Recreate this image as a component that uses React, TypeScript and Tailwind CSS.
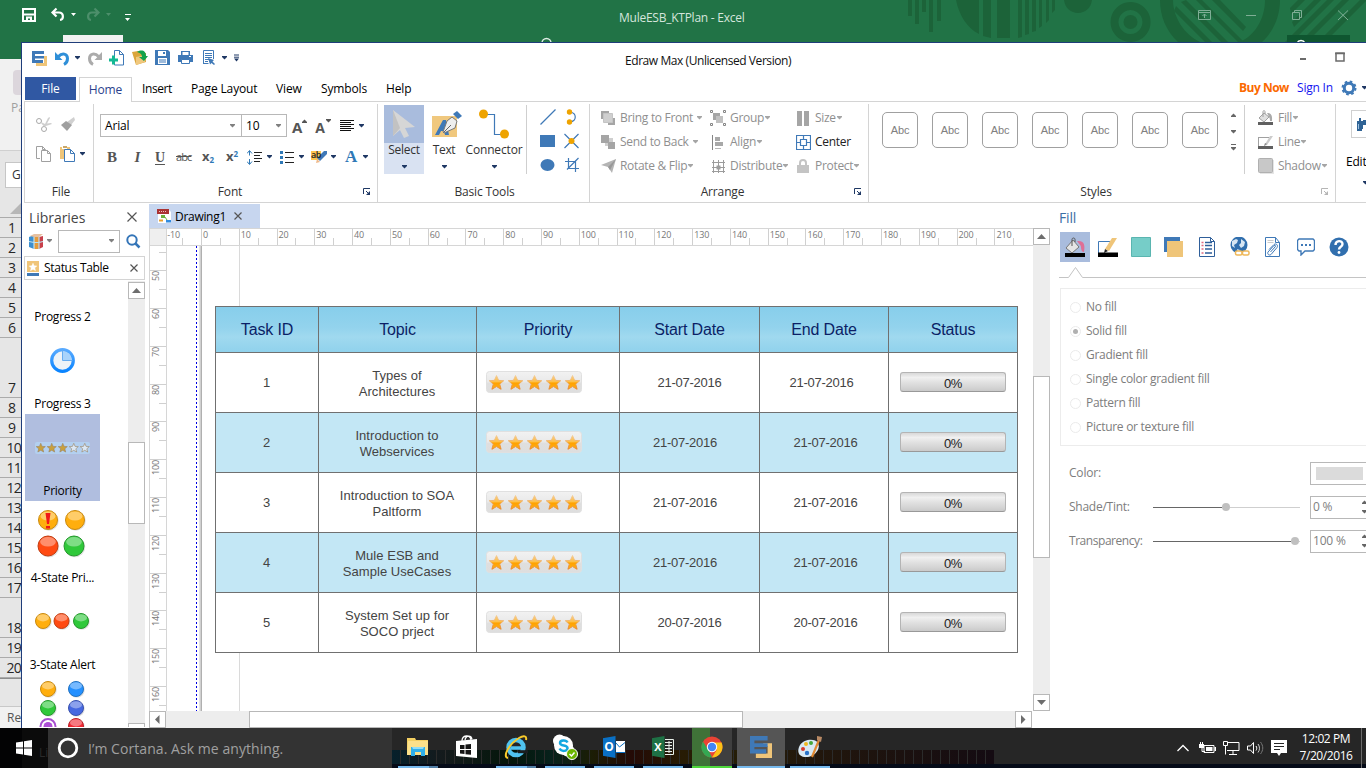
import React from "react";

type IconProps = { w: number; h: number; c?: string; children: React.ReactNode };

function Svg({ w, h, c = "", children }: IconProps) {
  return (
    <svg width={w} height={h} viewBox={`0 0 ${w} ${h}`} fill="none" className={`block shrink-0 ${c}`}>
      {children}
    </svg>
  );
}

function Caret({ color = "#1f3864", c = "" }: { color?: string; c?: string }) {
  return (
    <Svg w={7} h={4} c={c}>
      <path d="M1 0h5v1L3.500 3.500 1 1z" fill={color} />
    </Svg>
  );
}

/* ---------- Spreadsheet window behind ---------- */

function ExcelTitle() {
  return (
    <div className="relative h-[59px] bg-[#217346] overflow-hidden">
      <div className="absolute left-0 top-0">
        <Svg w={1366} h={59}>
          <g fill="#1c6339">
            <path d="M908 0h4v16h-4zM915 0h4v24h-4zM922 0h4v12h-4zM929 0h4v32h-4zM937 0h4v21h-4z" />
            <path d="M956 0h23v34c-12-6-20-19-23-34zM983 0h8v38l-8-2zM997 0h13v38h-13zM1018 0h4v37l-4 1zM1025 0h4v34l-4 1zM1032 0h4v31l-4 1zM1039 0h3v26l-3 2zM1046 0h3v20l-3 3zM1052 0h3v10l-3 3z" />
            <path d="M1064 0h28c-1 8-7 13-14 13s-13-5-14-13z" />
            <path d="M1130.500 2a20 20 0 1 0 .1 0zm0 8a12 12 0 1 1-.1 0z" fillRule="evenodd" />
            <circle cx="1130.500" cy="22" r="7" />
            <path d="M1160 0h13c0 18 12 35 27 42h-22c-12-11-18-26-18-42zM1265 0h15c0 16-6 31-18 42h-22c15-7 25-23 25-42z" />
            <path d="M1174 11l31 31h7l-36-36zM1181 2l40 40h7l-42-42zM1196 0l42 42h6l-42-42zM1212 0l31 31 3-4-26-27z" />
            <path d="M1290 8l8-8h7l-14 14zM1292 22l22-22h7l-27 27zM1303 24l24-24h7l-28 28zM1285 42l42-42h7l-42 42zM1300 42l42-42h7l-42 42zM1318 42l42-42h6v1l-41 41z" />
          </g>
          <path d="M23 9h12v12H23zM23 14.500h12M27 21v-3.500h4V21" stroke="#fff" strokeWidth="2" />
          <path d="M56.500 8.500L52.500 12.500l4 4M53 12.500h6c5 0 5 7 1 7.500" stroke="#fff" strokeWidth="2.200" />
          <path d="M71 13h5l-2.500 3zM125 18h5l-2.500 3z" fill="#fff" />
          <path d="M125 14.500h6" stroke="#fff" />
          <path d="M94.500 8.500l4 4-4 4M98 12.500h-6c-5 0-5 7-1 7.500" stroke="#4d8f6b" strokeWidth="2.200" />
          <path d="M106 13h5l-2.500 3z" fill="#4d8f6b" />
          <path d="M542 43a4.500 4.500 0 0 1 9 0" stroke="#dfece5" strokeWidth="1.500" />
          <path d="M1198.500 10.500h12v9h-12zM1198.500 12.500h12M1204.500 18v-4M1202.500 16l2-2 2 2M1246 15.500h10M1292.500 12.500h7v7h-7zM1294.500 12.500v-2h7v7h-2M1338 10.500l10 9.500M1348 10.500l-10 9.500" stroke="#7fae95" />
          <path d="M1287 35h63v7h-63z" fill="#0f5630" />
          <path d="M1297 43a4.500 4.500 0 0 1 8 0" stroke="#fff" strokeWidth="1.500" />
          <path d="M63 35h60v7H63z" fill="#f1f1f1" />
        </Svg>
      </div>
      <div className="relative pt-[8px] pl-[619px] text-[12px] leading-[20px] tracking-[-0.25px] text-[#d5e5dc] whitespace-nowrap">MuleESB_KTPlan - Excel</div>
    </div>
  );
}

function RowHead({ n, h = "h-[20px]" }: { n: string; h?: string }) {
  return (
    <div className={`${h} flex items-end justify-end border-b border-[#ababab] pr-[1px] pb-[1px] text-[14px] leading-[17px] text-[#262626]`}>
      <span className={n.length === 1 ? "pr-[5px]" : "tracking-[-0.7px]"}>{n}</span>
    </div>
  );
}

function ExcelWindow() {
  return (
    <div className="absolute inset-0 bg-[#e6e6e6]">
      <ExcelTitle />
      <div className="w-[22px] overflow-hidden">
        <div className="h-[92px] bg-[#f1f1f1] border-b border-[#d0d0d0] pt-[11px]">
          <div className="ml-[13px] h-[25px] w-[9px] rounded-l-sm bg-[#dcd6dc]" />
          <div className="ml-[11px] mt-[4px] text-[12px] text-[#a0a0a0]">Paste</div>
        </div>
        <div className="mt-[11px] ml-[5px] h-[26px] w-[30px] border border-[#c6c6c6] bg-white pl-[6px] text-[12px] leading-[24px] text-[#333]">G</div>
        <div className="flex h-[30px] items-end justify-end border-b border-[#ababab] pb-[3px]">
          <Svg w={12} h={12}><path d="M12 0v12H0z" fill="#b7b7b7" /></Svg>
        </div>
        {["1", "2", "3", "4", "5", "6"].map((n) => <RowHead key={n} n={n} />)}
        <RowHead n="7" h="h-[60px]" />
        {["8", "9", "10", "11", "12", "13", "14", "15", "16", "17"].map((n) => <RowHead key={n} n={n} />)}
        <RowHead n="18" h="h-[40px]" />
        <RowHead n="19" />
        <RowHead n="20" />
        <div className="h-[28px] border-t border-[#8d8d8d]" />
        <div className="h-[22px] border-t border-[#c8c8c8] bg-[#f1f1f1] pl-[7px] text-[12px] leading-[21px] text-[#555]">Ready</div>
      </div>
    </div>
  );
}

/* ---------- Title bar and tabs ---------- */

const BLUE = "#3f79b7";

function EdrawLogo({ s = 15 }: { s?: number }) {
  return (
    <svg width={s} height={s} viewBox="0 0 15 15" className="block shrink-0">
      <path d="M9 5h6v10H4v-3h8V7H9z" fill="#efc579" />
      <path d="M0 0h12v3H3v2h9v2.500H3V9h8v3H0z" fill={BLUE} />
    </svg>
  );
}

function QuickAccess() {
  return (
    <div className="flex h-[30px] items-center">
      <div className="ml-[10px]"><EdrawLogo /></div>
      <Svg w={15} h={15} c="ml-[8px]">
        <path d="M0 1v8h7.500L5 6.500 3 4z" fill="#2f8fd8" />
        <path d="M3.500 5.500C7 1.500 12.500 2.500 12.500 7.500c0 3-1.500 5-3.500 6" stroke="#2f8fd8" strokeWidth="3" />
      </Svg>
      <Caret c="ml-[4px]" />
      <Svg w={15} h={15} c="ml-[6px]">
        <path d="M15 1v8H7.500L10 6.500 12 4z" fill="#ababab" />
        <path d="M11.500 5.500C8 1.500 2.500 2.500 2.500 7.500c0 3 1.500 5 3.500 6" stroke="#ababab" strokeWidth="3" />
      </Svg>
      <Svg w={16} h={16} c="ml-[7px]">
        <path d="M5.500 6V.5h5l4 4v10.500h-9V14M10.500.5v4h4" stroke={BLUE} />
        <path d="M0 8.500h3V5.500h3v3h3v3H6v3H3v-3H0z" fill="#13b894" />
      </Svg>
      <Svg w={16} h={16} c="ml-[7px]">
        <path d="M0 2l6-1 2 2h6v9L4 15z" fill="#dba63c" />
        <path d="M4 7l10-2-1 7-9 3z" fill="#f0c87e" />
        <path d="M5 2c5-3 9-1 9 4h2l-4 5-5-4h3c0-3-2-4-5-5z" fill="#12a24c" />
      </Svg>
      <Svg w={16} h={16} c="ml-[7px]">
        <path d="M0 0h13l2 2v13H0z" fill={BLUE} />
        <path d="M3 1h8v5H3zM3 8h9v6H3z" fill="#fff" />
        <path d="M8 2h2v2H8zM4 9.500h7v1H4zM4 11.500h7v1H4z" fill={BLUE} />
      </Svg>
      <Svg w={16} h={16} c="ml-[7px]">
        <path d="M0 5h15v7H0zM3 1h9v4H3z" fill={BLUE} />
        <path d="M4.500 2h6v3h-6z" fill="#fff" />
        <path d="M3.500 9.500h8v4h-8z" fill="#fff" stroke={BLUE} />
        <path d="M11 6h2v1h-2z" fill="#fff" />
      </Svg>
      <Svg w={13} h={16} c="ml-[9px]">
        <path d="M.5 14V.5h10V9M.5 13.500h5M2 3.500h7M2 5.500h7M2 7.500h7M2 9.500h4M2 11.500h3" stroke={BLUE} />
        <path d="M5 8l6 2-1.500 1.500L12 14l-1 1-2.500-2L7 14.500z" fill={BLUE} />
      </Svg>
      <Caret c="ml-[5px]" />
      <Svg w={7} h={8} c="ml-[5px]">
        <path d="M1 1h5M1 3.200h5" stroke="#1f3864" />
        <path d="M1 4.500h5L3.500 7.500z" fill="#1f3864" />
      </Svg>
      <div className="ml-[385px] pt-[5px] text-[12px] tracking-[-0.43px] whitespace-nowrap text-[#111]">Edraw Max (Unlicensed Version)</div>
      <Svg w={46} h={10} c="ml-auto mr-[20px] mb-[3px]">
        <path d="M0 6h6v2H0z" fill="#6b6b6b" />
        <path d="M36 1h8v8h-8zM35 1.500h10" stroke="#6b6b6b" strokeWidth="1.500" />
      </Svg>
    </div>
  );
}

function MenuTabs() {
  return (
    <div className="flex h-[28px] items-end">
      <div className="ml-[3px] mb-[1px] h-[23px] w-[51px] bg-[#3058a3] text-center text-[12px] leading-[23px] text-white">File</div>
      <div className="ml-[3px] -mb-px h-[25px] w-[53px] border border-b-0 border-[#d4d4d4] bg-white text-center text-[12px] leading-[24px] text-[#2b3f8c]">Home</div>
      <div className="flex h-[25px] items-center text-[12px] text-black whitespace-nowrap">
        <span className="ml-[10px] w-[49px] tracking-[-0.4px]">Insert</span>
        <span className="w-[85px]">Page Layout</span>
        <span className="w-[45px]">View</span>
        <span className="w-[65px]">Symbols</span>
        <span>Help</span>
      </div>
      <div className="ml-auto flex h-[25px] items-center pb-[1px] text-[12px] whitespace-nowrap">
        <span className="w-[58px] font-bold tracking-[-0.5px] text-[#fb6a00]">Buy Now</span>
        <span className="w-[44px] tracking-[-0.2px] text-[#1414f0]">Sign In</span>
        <Svg w={16} h={16}>
          <circle cx="8" cy="8" r="4.700" stroke={BLUE} strokeWidth="3" />
          <circle cx="8" cy="8" r="6.500" stroke={BLUE} strokeWidth="2" strokeDasharray="2.600 2.500" />
        </Svg>
        <Caret c="ml-[4px] -mr-[2px]" />
      </div>
    </div>
  );
}

/* ---------- Ribbon ---------- */

function Launcher({ c = "", color = "#1f3864" }: { c?: string; color?: string }) {
  return (
    <Svg w={8} h={8} c={c}>
      <path d="M.5 6V.5H7M3 3l3 3" stroke={color} />
      <path d="M7 3v4H3z" fill={color} />
    </Svg>
  );
}

function Group({ w, label, labelPad, launcher, children }: { w: string; label: string; labelPad: string; launcher?: React.ReactNode; children: React.ReactNode }) {
  return (
    <div className={`${w} flex h-[99px] shrink-0 flex-col border-r border-[#d4d4d4]`}>
      <div className="h-[79px]">{children}</div>
      <div className="flex h-[17px] items-center">
        <span className={`${labelPad} flex-1 text-center text-[12px] text-[#333] whitespace-nowrap`}>{label}</span>
        {launcher}
      </div>
    </div>
  );
}

function FileGroup() {
  return (
    <Group w="w-[69px]" label="File" labelPad="pl-[4px]">
      <div className="flex h-[31px] items-center pl-[11px] pt-[5px] mt-[2px]">
        <Svg w={16} h={15}>
          <circle cx="3" cy="4" r="2.500" stroke="#a8a8a8" /><circle cx="8" cy="12" r="2.500" stroke="#a8a8a8" />
          <path d="M5 5l4 2 3-6 1.500-1 .5 1-3 5.500 4-.500 1 1-4.500 1.500L8 9.500 5 6z" fill="#cfcfcf" />
        </Svg>
        <Svg w={14} h={14} c="ml-[9px]">
          <path d="M13 0l1 3-4 5-4-3z" fill="#d0d0d0" /><path d="M5 4l6 4-5 6-6-6z" fill="#9f9f9f" />
        </Svg>
      </div>
      <div className="flex h-[31px] items-center pl-[11px] pt-[2px]">
        <Svg w={16} h={16}>
          <path d="M4 12.500H.5V.5h6l3 3M6.500.5v3h3M5.500 4.500h6l3 3v8h-9zM11.500 4.500v3h3" stroke="#a0a0a0" />
        </Svg>
        <Svg w={15} h={16} c="ml-[8px]">
          <path d="M0 1h10v12H0z" fill="#efc579" /><path d="M2 0h5v3H2z" fill="#fff" /><path d="M3 0h4v2H3z" fill="#c9a769" />
          <path d="M4.500 3.500h6l4 4v8h-10z" fill="#fff" stroke={BLUE} /><path d="M10.500 3.500v4h4" stroke={BLUE} />
        </Svg>
        <Caret c="ml-[4px]" />
      </div>
    </Group>
  );
}

function FontGroup() {
  return (
    <Group w="w-[284px]" label="Font" labelPad="pl-[3px]" launcher={<Launcher c="mr-[6px]" />}>
      <div className="flex h-[23px] items-center pl-[6px] mt-[10px] text-[12px] text-black">
        <div className="flex h-[23px] w-[142px] items-center justify-between border border-[#b8b8b8] pl-[4px] pr-[5px]">Arial<Caret color="#808080" /></div>
        <div className="-ml-px flex h-[23px] w-[46px] items-center justify-between border border-[#b8b8b8] pl-[4px] pr-[4px]">10<Caret color="#808080" /></div>
        <div className="ml-[5px] flex h-[20px] items-end text-[15px] font-bold leading-[17px] text-[#555]">A<Caret color="#555" c="rotate-180 mb-[13px] -ml-px" /></div>
        <div className="ml-[7px] flex h-[20px] items-end text-[14px] font-bold leading-[17px] text-[#555]">A<Caret color="#555" c="mb-[13px]" /></div>
        <Svg w={14} h={12} c="ml-[8px]"><path d="M0 .5h14M0 2.500h11M0 4.500h14M0 6.500h11M0 8.500h14M0 10.500h11" stroke="#111" /></Svg>
        <Caret c="ml-[4px]" />
      </div>
      <div className="mt-[5px] flex h-[30px] items-center pl-[13px] text-[#555]">
        <span className="w-[24px] font-['Liberation_Serif'] text-[15px] font-bold">B</span>
        <span className="w-[24px] font-['Liberation_Serif'] text-[15px] font-bold italic">&nbsp;I</span>
        <span className="w-[21px] font-['Liberation_Serif'] text-[14px] font-bold underline underline-offset-2">U</span>
        <span className="w-[26px] text-[11px] tracking-[-0.9px] line-through">abc</span>
        <span className="w-[24px] text-[13px] font-bold">x<sub className="text-[8px] text-[#2f79b7]">2</sub></span>
        <span className="w-[21px] text-[13px] font-bold">x<sup className="text-[8px] text-[#2f79b7]">2</sup></span>
        <Svg w={15} h={15}>
          <path d="M2.500 1v4.500M2.500 9v5M0 3.500l2.500-3 2.500 3M0 11.500l2.500 3 2.500-3" stroke="#2f79b7" /><path d="M7 2.500h8M7 5.500h6M7 8.500h8M7 11.500h6" stroke="#222" />
        </Svg>
        <Caret c="ml-[4px]" />
        <Svg w={14} h={13} c="ml-[7px]">
          <path d="M0 0h3v3H0zM0 5h3v3H0zM0 10h3v3H0z" fill="#2f79b7" /><path d="M5 1.500h9M5 6.500h9M5 11.500h9" stroke="#222" />
        </Svg>
        <Caret c="ml-[4px]" />
        <div className="relative ml-[6px] h-[14px] w-[17px]">
          <div className="h-[9px] w-[10px] bg-[#ffc64f] mt-[1px]" />
          <div className="absolute left-0 top-0"><Svg w={17} h={14}><path d="M13 1h3v3l-7 7-3-3z" fill={BLUE} /><path d="M6 9l3 3-4 1z" fill="#efb98a" /></Svg></div>
          <div className="absolute left-0 top-0 text-[9px] leading-[9px] font-semibold tracking-[-0.5px] text-[#222]">ab</div>
        </div>
        <Caret c="ml-[2px]" />
        <span className="ml-[8px] w-[13px] font-['Liberation_Serif'] text-[17px] font-bold text-[#2f79b7]">A</span>
        <Caret c="ml-[4px]" />
      </div>
    </Group>
  );
}

function BasicTools() {
  return (
    <Group w="w-[212px]" label="Basic Tools" labelPad="pl-[2px]">
      <div className="flex pl-[6px] pt-[1px] text-[12px] text-[#333]">
        <div className="flex h-[69px] w-[40px] flex-col items-center bg-[#d9e2f2]">
          <div className="flex h-[38px] w-[40px] items-center justify-center bg-[#a9bcdd]">
            <Svg w={24} h={30}><path d="M1 1v26l7-6 4 8 5-2-4-8 10-1z" fill="#d6d6d6" /><path d="M1 1v26l7-8z" fill="#c2c2c2" /></Svg>
          </div>
          <span className="leading-[14px] -tracking-[0.3px]">Select</span>
          <Caret c="mt-[8px]" />
        </div>
        <div className="flex h-[69px] w-[40px] flex-col items-center">
          <div className="flex h-[38px] items-center pl-[5px]">
            <Svg w={30} h={28}>
              <path d="M0 6h25v21H0z" fill="#f0c87e" />
              <path d="M3 25l8-15h3l3 15h-4l-1-4H9l-2 4z" fill={BLUE} />
              <path d="M25 1l5 5-4 3-5-5z" fill={BLUE} /><path d="M20 7l5 4-2 7-11 5-1-1 4-11z" fill="#eee" stroke="#777" /><path d="M12 22l7-7" stroke="#666" />
            </Svg>
          </div>
          <span className="leading-[14px] -tracking-[0.3px]">Text</span>
          <Caret c="mt-[8px]" />
        </div>
        <div className="flex h-[69px] w-[60px] flex-col items-center">
          <div className="flex h-[38px] items-center">
            <Svg w={30} h={30}><path d="M5 5.500h10.500v20H25" stroke={BLUE} strokeWidth="1.200" /><circle cx="4.500" cy="5" r="4.500" fill="#eea300" /><circle cx="25.500" cy="25" r="4.500" fill="#eea300" /></Svg>
          </div>
          <span className="leading-[14px]">Connector</span>
          <Caret c="mt-[8px]" />
        </div>
        <div className="ml-[2px] h-[69px] w-px bg-[#cfcfcf]" />
        <div className="ml-[13px] grid h-[72px] grid-cols-[24px_16px] grid-rows-3 items-center">
          <Svg w={16} h={16}><path d="M.5 15.500l15-15" stroke={BLUE} strokeWidth="1.200" /></Svg>
          <Svg w={16} h={16}><path d="M6 3c7 1 7 9 0 10" stroke={BLUE} strokeWidth="1.200" /><circle cx="5.500" cy="3" r="2.700" fill="#eea300" /><circle cx="5.500" cy="13" r="2.700" fill="#eea300" /></Svg>
          <Svg w={16} h={16}><path d="M0 2h15v12H0z" fill={BLUE} /></Svg>
          <Svg w={16} h={16}><path d="M.5 1l14 14M14.500 1L.5 15" stroke={BLUE} strokeWidth="1.200" /><circle cx="7.500" cy="8" r="3" fill="#eea300" /></Svg>
          <Svg w={16} h={16}><ellipse cx="7.500" cy="8" rx="7" ry="6" fill={BLUE} /></Svg>
          <Svg w={16} h={16}><path d="M4.500 1v10.500H15M1 4.500h10.500V15M14.500 1L3 12.500" stroke={BLUE} strokeWidth="1.200" /></Svg>
        </div>
      </div>
    </Group>
  );
}

function ArrangeItem({ icon, text, gap = false, active = false }: { icon: React.ReactNode; text: string; gap?: boolean; active?: boolean }) {
  return (
    <div className={`flex h-[24px] items-center whitespace-nowrap text-[12px] ${active ? "text-[#222]" : "text-[#8f8f8f]"}`}>
      <div className="mr-[4px] flex w-[16px] justify-center">{icon}</div>
      <span className="tracking-[-0.3px]">{text}</span>
      {!active && <Caret color="#a5a5a5" c={gap ? "ml-[3px]" : ""} />}
    </div>
  );
}

function ArrangeGroup() {
  return (
    <Group w="w-[279px]" label="Arrange" labelPad="pl-[1px]" launcher={<Launcher c="mr-[6px]" />}>
      <div className="flex pt-[2px] pl-[10px]">
        <div className="w-[110px]">
          <ArrangeItem gap text="Bring to Front" icon={<Svg w={15} h={14}><path d="M0 0h8v8H0zM7 7h7v7H7z" fill="#a5a5a5" /><path d="M2.500 2.500h9v9h-9z" fill="#cfcfcf" stroke="#c4c4c4" /></Svg>} />
          <ArrangeItem gap text="Send to Back" icon={<Svg w={15} h={14}><path d="M4 3h8v8H4z" fill="#cfcfcf" /><path d="M0 0h8v8H0zM7 7h7v7H7z" fill="#a5a5a5" /></Svg>} />
          <ArrangeItem text="Rotate & Flip" icon={<Svg w={15} h={14}><path d="M15 0l-4 14-4-6-7-2z" fill="#b4b4b4" /><path d="M15 0L7 8l2 3z" fill="#989898" /></Svg>} />
        </div>
        <div className="w-[85px]">
          <ArrangeItem text="Group" icon={<Svg w={16} h={16}><path d="M.5.500h2v2h-2zM13.500.5h2v2h-2zM.5 13.500h2v2h-2zM13.500 13.500h2v2h-2z" stroke="#858585" /><path d="M3 3h7v7H3z" fill="#a5a5a5" /><path d="M6 6h7v7H6z" fill="#c0c0c0" /></Svg>} />
          <ArrangeItem text="Align" icon={<Svg w={12} h={15}><path d="M.5 0v15" stroke="#858585" /><path d="M3 2h5v4H3zM3 7h8v4H3z" fill="#a8a8a8" /><path d="M3 13.500h6" stroke="#b5b5b5" /></Svg>} />
          <ArrangeItem text="Distribute" icon={<Svg w={14} h={15}><path d="M2.500 1v13M7.500 1v13M12.500 1v13M1 3.500h13M1 8.500h13M1 12.500h13" stroke="#9c9c9c" /><path d="M5.500 6.500h4v4h-4z" fill="#9c9c9c" /></Svg>} />
        </div>
        <div>
          <ArrangeItem text="Size" icon={<Svg w={12} h={15}><path d="M0 0h5v15H0zM7 0h5v15H7z" fill="#a5a5a5" /></Svg>} />
          <ArrangeItem active text="Center" icon={<Svg w={15} h={15}><path d="M.5.500h14v14H.5zM.5 7.500h4M10.500 7.500h4M7.500 .5v4M7.500 10.500v4M4.500 4.500h6v6h-6z" stroke={BLUE} strokeWidth="1.200" /></Svg>} />
          <ArrangeItem text="Protect" icon={<Svg w={12} h={15}><path d="M0 6h12v8H0z" fill="#c4c4c4" /><path d="M3 6V4a3 3 0 0 1 6 0v2" stroke="#c4c4c4" strokeWidth="2" /></Svg>} />
        </div>
      </div>
    </Group>
  );
}

function StylesGroup() {
  return (
    <Group w="w-[467px]" label="Styles" labelPad="pl-[2px]" launcher={<Launcher color="#b5b5b5" c="mr-[6px]" />}>
      <div className="flex pt-[1px]">
        <div className="ml-[13px] mt-[7px] flex gap-[14px]">
          {[0, 1, 2, 3, 4, 5, 6].map((i) => (
            <div key={i} className="flex h-[36px] w-[36px] items-center justify-center rounded-[5px] border border-[#a0a0a0] font-['Liberation_Sans'] text-[11px] text-[#808080]">Abc</div>
          ))}
        </div>
        <div className="ml-[12px] mt-[8px] flex w-[7px] flex-col items-center">
          <Caret color="#666" c="rotate-180" />
          <Caret color="#666" c="mt-[13px]" />
          <div className="mt-[10px] h-px w-[5px] bg-[#666]" />
          <Caret color="#666" c="mt-[2px]" />
        </div>
        <div className="ml-[7px] h-[69px] w-px bg-[#cfcfcf]" />
        <div className="ml-[13px] pt-[1px]">
          <ArrangeItem text="Fill" icon={<Svg w={16} h={16}><path d="M1 8l5-5 5 4-5 5z" fill="#e0e0e0" stroke="#a0a0a0" /><path d="M5 7V2c0-2 2-2 2 0v2" stroke="#a0a0a0" /><path d="M9 3c6 0 5 5 5 8h-2c0-3-1-4-3-8z" fill="#aaa" /><path d="M0 12h15v3H0z" fill="#606060" /></Svg>} />
          <ArrangeItem text="Line" icon={<Svg w={16} h={15}><path d="M1 2.500h10M.5 2v9" stroke="#a0a0a0" /><path d="M12 1h3L9 10l-3 1z" fill="#ccc" /><path d="M6 11l1-3 2 1z" fill="#888" /><path d="M0 11h15v3H0z" fill="#606060" /></Svg>} />
          <ArrangeItem text="Shadow" icon={<Svg w={16} h={16}><path d="M2 2h14v14H2z" fill="#e5e5e5" /><rect x=".5" y=".5" width="14" height="14" rx="1" fill="#c8c8c8" stroke="#b0b0b0" /></Svg>} />
        </div>
      </div>
    </Group>
  );
}

function EditGroup() {
  return (
    <div className="w-[31px] shrink-0 overflow-hidden pl-[10px] pt-[6px] text-[12px] text-black">
      <div className="ml-[5px] flex h-[28px] w-[40px] items-center border border-[#d0d0d0] pl-[5px]">
        <Svg w={16} h={16}><path d="M0 5h2V2h2v3h2v-1h3V2h2v3h3v9h-4V9H6v4H5v2H0z" fill="#2f6395" /><path d="M1.500 8v5" stroke="#9bc0e0" /></Svg>
      </div>
      <div className="mt-[16px] leading-[16px] -tracking-[0.2px]">Editing</div>
      <Caret c="mt-[11px] ml-[16px]" />
    </div>
  );
}

/* ---------- Libraries panel ---------- */

function ScrollButton({ dir, c = "" }: { dir: "up" | "down" | "left" | "right"; c?: string }) {
  const paths = { up: "M3 10h9L7.500 5z", down: "M3 5h9l-4.500 5z", left: "M9.500 3v9L5 7.500z", right: "M5 3v9L9.500 7.500z" };
  return (
    <div className={`h-[17px] w-[17px] shrink-0 border border-[#b8b8b8] bg-white ${c}`}>
      <Svg w={15} h={15}><path d={paths[dir]} fill="#6d6d6d" /></Svg>
    </div>
  );
}

function Star({ x, y, s, fill, stroke }: { x: number; y: number; s: number; fill: string; stroke: string }) {
  return (
    <path transform={`translate(${x} ${y}) scale(${s / 16})`} d="M8 0.500l2.200 5.200 5.500.4-4.200 3.600 1.400 5.500L8 12.300l-4.900 2.900 1.400-5.500L.3 6.100l5.500-.4z" fill={fill} stroke={stroke} strokeWidth="1" />
  );
}

function Ball({ x, y, r, fill, stroke }: { x: number; y: number; r: number; fill: string; stroke: string }) {
  return (
    <g>
      <circle cx={x + 0.8} cy={y + 0.8} r={r} fill="#000" opacity=".12" />
      <circle cx={x} cy={y} r={r - 0.5} fill={fill} stroke={stroke} />
      <ellipse cx={x} cy={y - r * 0.4} rx={r * 0.75} ry={r * 0.45} fill="#fff" opacity=".38" />
    </g>
  );
}

const OR: [string, string] = ["#ffae0d", "#c98a10"];
const RD: [string, string] = ["#ff4a12", "#c23c10"];
const GR: [string, string] = ["#2fc83a", "#25982c"];

function LibItem({ label, selected = false, children }: { label: string; selected?: boolean; children: React.ReactNode }) {
  return (
    <div className={`flex h-[87px] w-[75px] shrink-0 flex-col justify-between ${selected ? "bg-[#b0bedf]" : ""}`}>
      {children}
      <span className="self-center pb-[1px] text-[12px] leading-[18px] tracking-[-0.25px] whitespace-nowrap text-black">{label}</span>
    </div>
  );
}

function LibraryList() {
  return (
    <div className="flex h-[446px] overflow-hidden">
      <div className="flex w-[106px] flex-col overflow-hidden pl-[3px]">
        <div className="-mt-[41px]"><LibItem label="Progress 2"><span /></LibItem></div>
        <LibItem label="Progress 3">
          <Svg w={75} h={66}>
            <defs><linearGradient id="ring" x1="0" y1="0" x2="0" y2="1"><stop stopColor="#58aaff" /><stop offset="1" stopColor="#0a84ff" /></linearGradient></defs>
            <circle cx="37.500" cy="33.500" r="10.800" fill="#eef3f8" stroke="url(#ring)" strokeWidth="3.200" />
            <path d="M37.500 33V24a9.500 9.500 0 0 1 9.500 9z" fill="#a9d3fb" /><path d="M37.500 23v10.500h10" stroke="#67acf0" />
          </Svg>
        </LibItem>
        <LibItem label="Priority" selected>
          <Svg w={75} h={66}>
            <rect x="10" y="28" width="55" height="12" rx="2" fill="#b3d0f0" />
            {[0, 1, 2, 3, 4].map((i) => <Star key={i} x={11 + i * 11} y={29} s={9.500} fill={i < 3 ? "#c9a03c" : "#dce8f4"} stroke="#9a8260" />)}
          </Svg>
        </LibItem>
        <LibItem label="4-State Pri...">
          <Svg w={75} h={66}>
            <Ball x={23} y={19} r={10} fill={OR[0]} stroke={OR[1]} /><Ball x={50} y={19} r={10} fill={OR[0]} stroke={OR[1]} />
            <Ball x={23} y={45} r={10.500} fill={RD[0]} stroke={RD[1]} /><Ball x={49} y={45} r={10.500} fill={GR[0]} stroke={GR[1]} />
            <path d="M20.500 12h5l-1.500 11h-2zM21 25h4v2.500h-4z" fill="#f01818" />
          </Svg>
        </LibItem>
        <LibItem label="3-State Alert">
          <Svg w={75} h={66}>
            <Ball x={18} y={33} r={8} fill={OR[0]} stroke={OR[1]} /><Ball x={36.500} y={33} r={8} fill={RD[0]} stroke={RD[1]} /><Ball x={56} y={33} r={8} fill={GR[0]} stroke={GR[1]} />
          </Svg>
        </LibItem>
        <LibItem label="">
          <Svg w={75} h={66}>
            <Ball x={23} y={14} r={8} fill={OR[0]} stroke={OR[1]} /><Ball x={51} y={14} r={8} fill="#2490ff" stroke="#2272c0" />
            <Ball x={23} y={33} r={8} fill={GR[0]} stroke={GR[1]} /><Ball x={51} y={33} r={8} fill="#4668e0" stroke="#3a52ad" />
            <circle cx="23" cy="51.500" r="7.500" fill="#fff" stroke="#a84fd0" strokeWidth="2" /><circle cx="23" cy="51.500" r="4.500" fill="#ad4fd6" />
            <Ball x={51} y={51} r={8} fill="#f02832" stroke="#bb2028" />
          </Svg>
        </LibItem>
      </div>
      <div className="flex w-[17px] flex-col bg-[#ededed]">
        <ScrollButton dir="up" c="mt-[1px]" />
        <div className="mt-[143px] h-[82px] w-[17px] shrink-0 border border-[#b8b8b8] bg-white" />
        <div className="mt-auto h-[4px] w-[17px] border border-b-0 border-[#b8b8b8] bg-white" />
      </div>
    </div>
  );
}

function Libraries() {
  return (
    <div className="w-[126px] shrink-0">
      <div className="flex h-[25px] items-end justify-between pl-[7px] pr-[11px] pb-[1px]">
        <span className="text-[14px] leading-[19px] tracking-[-0.05px] text-[#444]">Libraries</span>
        <Svg w={10} h={10} c="mb-[5px]"><path d="M.5.500l9 9M9.500.5l-9 9" stroke="#555" strokeWidth="1.200" /></Svg>
      </div>
      <div className="flex h-[27px] items-center pl-[7px] pb-px">
        <Svg w={15} h={15}>
          <path d="M0 3l5-2v14l-5-2z" fill="#3c8fd0" /><path d="M5 2h5v13H5z" fill="#e59a3a" /><path d="M10 3l4-1v11l-4 2z" fill="#c8404a" /><path d="M1 2l4-2h9l-4 3H5z" fill="#e6c0a0" /><path d="M0 7.500l5 1h5l4-1M5 3v12M10 3v12" stroke="#bfe3f0" strokeWidth="1.200" />
        </Svg>
        <Caret color="#808080" c="ml-[2px]" />
        <div className="ml-[5px] flex h-[23px] w-[62px] items-center justify-end border border-[#b8b8b8] pr-[4px]"><Caret color="#808080" /></div>
        <Svg w={15} h={15} c="ml-[6px]"><circle cx="6" cy="6" r="4.700" stroke="#3475b8" strokeWidth="2" /><path d="M9.500 9.500l4 4" stroke="#3475b8" strokeWidth="2.500" /></Svg>
      </div>
      <div className="ml-[2px] mt-[1px] flex h-[24px] w-[121px] items-center border border-[#d4d4d4] pl-[2px] pr-[6px] text-[12px] text-black">
        <Svg w={12} h={15}><path d="M0 0h12v11H0z" fill="#f0c579" /><path d="M0 12h12v3H0z" fill={BLUE} /><Star x={2} y={2} s={8} fill="#fff" stroke="#fff" /></Svg>
        <span className="ml-[5px] tracking-[-0.3px]">Status Table</span>
        <Svg w={8} h={8} c="ml-auto"><path d="M.5.500l7 7M7.500.5l-7 7" stroke="#555" strokeWidth="1.200" /></Svg>
      </div>
      <div className="pt-px"><LibraryList /></div>
    </div>
  );
}

/* ---------- Drawing area ---------- */

const H_LABELS = ["-10", "0", "10", "20", "30", "40", "50", "60", "70", "80", "90", "100", "110", "120", "130", "140", "150", "160", "170", "180", "190", "200", "210"];
const V_LABELS = ["40", "50", "60", "70", "80", "90", "100", "110", "120", "130", "140", "150", "160"];

function HRuler() {
  return (
    <div className="flex h-[18px] w-[866px] overflow-hidden border-y border-[#d6d6d6]">
      {H_LABELS.map((l, i) => (
        <div key={l} className={`flex h-[16px] w-[37.790px] shrink-0 border-l border-[#d0d0d0] ${i === 0 ? "-ml-[3.800px]" : ""}`}>
          <span className={`w-[17.900px] text-[9px] leading-[11px] text-[#777] whitespace-nowrap ${i === 0 ? "pl-[3px]" : "pl-[1px]"}`}>{l}</span>
          <div className="mt-[9px] h-[7px] w-px bg-[#d0d0d0]" />
        </div>
      ))}
    </div>
  );
}

function VRuler() {
  return (
    <div className="flex h-[465px] w-[18px] shrink-0 flex-col overflow-hidden border-x border-[#d6d6d6]">
      {V_LABELS.map((l, i) => (
        <div key={l} className={`flex h-[37.790px] w-[16px] shrink-0 flex-col border-t border-[#d0d0d0] ${i === 0 ? "-mt-[13.500px]" : ""}`}>
          <div className="h-[18px] w-[11px] pt-[1px] text-[9px] leading-[11px] text-[#777] [writing-mode:vertical-rl] rotate-180 whitespace-nowrap text-right">{i === 0 ? "" : l}</div>
          <div className="ml-[9px] h-px w-[7px] bg-[#d0d0d0]" />
        </div>
      ))}
    </div>
  );
}

const TASKS = [
  { topic: ["Types of", "Architectures"], date: "21-07-2016" },
  { topic: ["Introduction to", "Webservices"], date: "21-07-2016" },
  { topic: ["Introduction to SOA", "Paltform"], date: "21-07-2016" },
  { topic: ["Mule ESB and", "Sample UseCases"], date: "21-07-2016" },
  { topic: ["System Set up for", "SOCO prject"], date: "20-07-2016" },
];

function Rating() {
  return (
    <Svg w={96} h={22}>
      <defs>
        <linearGradient id="plate" x1="0" y1="0" x2="0" y2="1"><stop stopColor="#f2f2f2" /><stop offset=".5" stopColor="#e9e9e9" /><stop offset=".55" stopColor="#dfdfdf" /><stop offset="1" stopColor="#dedede" /></linearGradient>
        <linearGradient id="gold" x1="0" y1="0" x2="0" y2="1"><stop stopColor="#f8cf85" /><stop offset=".45" stopColor="#fdc04a" /><stop offset=".55" stopColor="#ffa200" /><stop offset="1" stopColor="#ffae18" /></linearGradient>
        <linearGradient id="goldEdge" x1="0" y1="0" x2="0" y2="1"><stop stopColor="#f3cf9a" /><stop offset="1" stopColor="#e8862a" /></linearGradient>
      </defs>
      <rect x=".5" y=".5" width="95" height="21" rx="3" fill="url(#plate)" stroke="#e0e0e0" />
      {[0, 1, 2, 3, 4].map((i) => <Star key={i} x={3 + i * 19} y={4} s={15} fill="url(#gold)" stroke="url(#goldEdge)" />)}
    </Svg>
  );
}

function TaskTable() {
  const cell = "flex items-center justify-center border-r border-b border-[#707070]";
  const cols = "grid grid-cols-[103px_158px_143px_140px_129px_129px]";
  return (
    <div className="relative ml-[48px] mt-[60px] w-[803px] border-l border-t border-[#707070] bg-white font-['Liberation_Sans']">
      <div className={`${cols} h-[46px] bg-[linear-gradient(#87ceeb,#93d3ed_45%,#a0d9ef_65%,#8fd1ec)] text-[16px] tracking-[-0.15px] text-[#0b1f66]`}>
        {["Task ID", "Topic", "Priority", "Start Date", "End Date", "Status"].map((h) => (
          <div key={h} className={cell}>{h}</div>
        ))}
      </div>
      {TASKS.map((t, i) => (
        <div key={i} className={`${cols} h-[60px] text-[13px] text-[#444] ${i % 2 ? "bg-[#c3e7f5]" : "bg-white"}`}>
          <div className={`${cell} pt-px pr-px`}>{i + 1}</div>
          <div className={`${cell} pt-[2px] pr-[1px] text-center leading-[16px] tracking-[0.05px]`}><div>{t.topic[0]}<br />{t.topic[1]}</div></div>
          <div className={`${cell} !justify-start pl-[9px] pb-px`}><Rating /></div>
          <div className={`${cell} pt-px tracking-[-0.25px] ${i === 0 || i === 4 ? "" : "pr-[9px]"}`}>{t.date}</div>
          <div className={`${cell} pt-px tracking-[-0.25px] ${i === 0 ? "pr-[5px]" : "pl-[3px]"}`}>{t.date}</div>
          <div className={`${cell} pb-px`}>
            <div className="h-[20px] w-[106px] rounded-[3px] border border-[#b4b4b4] border-b-[#999] bg-[linear-gradient(#d8d8d8,#f0f0f0_25%,#e2e2e2_50%,#d9d9d9_70%,#cacaca)] text-center text-[13px] leading-[21px] tracking-[-0.4px] text-[#222]">0%</div>
          </div>
        </div>
      ))}
    </div>
  );
}

function Canvas() {
  return (
    <div className="relative h-[465px] w-[866px] overflow-hidden bg-white">
      <div className="absolute inset-y-0 left-[29px] w-px bg-[repeating-linear-gradient(#0000e0_0_2px,#fff_2px_4px)]" />
      <div className="absolute inset-y-0 left-[32px] w-[3px] bg-[linear-gradient(90deg,#eee,#d0d0d0,#a0a0a0)]" />
      <div className="absolute inset-y-0 left-[72px] w-px bg-[#dadada]" />
      <TaskTable />
    </div>
  );
}

function DrawingArea() {
  return (
    <div className="ml-px w-[901px] shrink-0">
      <div className="flex h-[25px] items-end">
        <div className="flex h-[24px] w-[111px] items-center bg-[#c7d6ef] pl-[8px] pr-[17px] text-[12px] text-black">
          <Svg w={14} h={14}>
            <path d="M1 0h10l3 3v11H1z" fill="#fff" /><path d="M0 0h12v5H0z" fill="#a33" /><path d="M2 2.500h8" stroke="#f0c0c0" strokeDasharray="1 1" /><path d="M4 6h4v3H4z" fill="#6db33f" /><path d="M2 10.500h4v2H2z" fill="#e8a030" /><path d="M9 11h5v2.500H9z" fill="#2f8ae0" /><path d="M8 8l2 3" stroke="#6db33f" />
          </Svg>
          <span className="ml-[4px] pt-px tracking-[-0.3px]">Drawing1</span>
          <Svg w={9} h={9} c="ml-auto"><path d="M.5.500l7 7M7.500.5l-7 7" stroke="#555" strokeWidth="1.200" /></Svg>
        </div>
      </div>
      <div className="flex">
        <div className="h-[18px] w-[18px] border border-[#d6d6d6] bg-[#efefef]" />
        <HRuler />
        <ScrollButton dir="up" />
      </div>
      <div className="flex">
        <VRuler />
        <Canvas />
        <div className="-mt-px flex h-[466px] w-[17px] flex-col bg-[#ededed]">
          <div className="mt-[131px] h-[182px] border border-[#b8b8b8] bg-white" />
          <ScrollButton dir="down" c="mt-auto" />
        </div>
      </div>
      <div className="flex w-[883px] bg-[#ededed]">
        <ScrollButton dir="left" />
        <div className="ml-[83px] h-[17px] w-[494px] border border-[#b8b8b8] bg-white" />
        <ScrollButton dir="right" c="ml-auto" />
      </div>
    </div>
  );
}

/* ---------- Fill panel ---------- */

function Slider({ pos }: { pos: "mid" | "end" }) {
  return (
    <div className="flex w-[147px] shrink-0 items-center">
      <div className={`h-px bg-[#666] ${pos === "mid" ? "w-[69px]" : "w-[138px]"}`} />
      <div className="h-[8px] w-[8px] rounded-full bg-[#c0c0c0]" />
      <div className="h-px flex-1 bg-[#cfcfcf]" />
    </div>
  );
}

function Spin({ v }: { v: string }) {
  return (
    <div className="ml-[10px] flex h-[23px] w-[66px] shrink-0 items-center border border-[#b8b8b8] pl-[2px] text-[#808080]">
      <span className="w-[48px] shrink-0 tracking-[-0.2px]">{v}</span>
      <div className="flex flex-col gap-[6px]"><Caret color="#666" c="rotate-180" /><Caret color="#666" /></div>
    </div>
  );
}

function FillPanel() {
  return (
    <div className="w-[316px] shrink-0 overflow-hidden text-[12px] text-[#7d7d7d]">
      <div className="h-[29px] pl-[9px] pt-[5px] text-[14px] leading-[20px] text-[#3b6ea5]">Fill</div>
      <div className="flex gap-[3px] pl-[10px] whitespace-nowrap *:flex *:h-[30px] *:w-[30px] *:shrink-0 *:items-center *:justify-center">
        <div className="bg-[#a9bcdd]"><Svg w={20} h={20}><path d="M1 11l7-8 6 7-7 6z" fill="#e4e4e4" stroke="#777" /><path d="M7 9V2.500c0-2 3-2 3 0V5" stroke="#555" /><path d="M12 4c8-1 8 5 7 11-2 0-3-2-3-5 0-2-2-3-4-6z" fill="#df6f95" /><path d="M0 16h20v4H0z" fill="#000" /></Svg></div>
        <div><Svg w={20} h={19}><path d="M.5 15V3.500H13" stroke={BLUE} /><path d="M14 0h5l-8 13-4-2z" fill="#efc579" /><path d="M7 11l3 2-4 2z" fill="#222" /><path d="M0 14.500h20V19H0z" fill="#000" /></Svg></div>
        <div><Svg w={20} h={20}><path d="M.5.500h19v19H.5z" fill="#76cdc8" stroke="#5ab5b0" /></Svg></div>
        <div><Svg w={20} h={20}><path d="M0 0h16v15H0z" fill={BLUE} /><path d="M3 4h16v16H3z" fill="#efc579" /></Svg></div>
        <div><Svg w={16} h={20}><path d="M.5.500h11l4 4v15H.5zM11.500.5v4h4" stroke="#2f5f9a" /><path d="M6 5.500h7M6 8.500h7M6 12h7M6 16h7" stroke="#2f5f9a" strokeWidth="1.500" /><path d="M2.500 5.500h2M2.500 8.500h2M2.500 12h2M2.500 16h2" stroke="#e06a80" strokeWidth="1.500" /></Svg></div>
        <div><Svg w={20} h={20}><circle cx="9" cy="8" r="8.500" fill="#316fae" /><path d="M2 4l4-2 2 1-1 3-3 2 1 3-3-2zM11 2l4 3-1 4-3 2-2-3 2-2zM7 12l3 1-2 3z" fill="#d7e6f3" /><rect x="5.500" y="14" width="6.500" height="4" rx="1.500" fill="#fff" stroke="#efb858" strokeWidth="1.500" /><rect x="12.500" y="14" width="6.500" height="4" rx="1.500" fill="#fff" stroke="#efb858" strokeWidth="1.500" /></Svg></div>
        <div><Svg w={16} h={20}><path d="M.5.500h10l4 5v14H.5zM10.500.5v5h4" stroke={BLUE} /><path d="M2.500 3.500h6M2.500 5.500h6" stroke="#ccc" /><path d="M4 12.500l5-5c2-1.500 4.500.5 3 3l-6 7c-2 1.500-4-.5-3-2.500l6-6.500c1.500-.5 2 .5 1 1.500l-4.500 5" stroke={BLUE} /></Svg></div>
        <div><Svg w={18} h={18}><path d="M2 1h14l1.500 1.500v9L16 13H8l-4 4v-4H2L.5 11.500v-9z" stroke={BLUE} strokeWidth="1.400" /><path d="M4 6h2v2H4zM8 6h2v2H8zM12 6h2v2h-2z" fill={BLUE} /></Svg></div>
        <div><Svg w={20} h={20}><circle cx="10" cy="10" r="9.500" fill="#316fae" /><path d="M6.500 8c0-5 7-5 7-1 0 3-3.500 2.500-3.500 5.500" stroke="#fff" strokeWidth="2.400" /><circle cx="10" cy="15.500" r="1.400" fill="#fff" /></Svg></div>
      </div>
      <Svg w={307} h={12} c="ml-[9px] mt-[4px]"><path d="M0 11.500h9.500l7-10 7 10H307" stroke="#c4c4c4" /></Svg>
      <div className="ml-[10px] mt-[10px] h-[158px] w-[320px] border border-[#ececec] pt-[6px] pl-[9px]">
        {["No fill", "Solid fill", "Gradient fill", "Single color gradient fill", "Pattern fill", "Picture or texture fill"].map((t, i) => (
          <div key={t} className="flex h-[24px] items-center">
            <div className="flex h-[11px] w-[11px] items-center justify-center rounded-full border border-[#ebebeb]">
              {i === 1 && <div className="h-[5px] w-[5px] rounded-full bg-[#b0b0b0]" />}
            </div>
            <span className="ml-[5px] tracking-[-0.28px]">{t}</span>
          </div>
        ))}
      </div>
      <div className="ml-[19px] mt-[10px] *:flex *:h-[34px] *:items-center">
        <div>
          <span className="w-[241px] shrink-0 tracking-[-0.2px]">Color:</span>
          <div className="flex h-[23px] w-[66px] shrink-0 items-center border border-[#b8b8b8] pl-[5px]"><div className="h-[13px] w-[47px] bg-[#dbdbdb]" /><Caret color="#808080" c="ml-[2px]" /></div>
        </div>
        <div><span className="w-[84px] shrink-0 tracking-[-0.25px]">Shade/Tint:</span><Slider pos="mid" /><Spin v="0 %" /></div>
        <div><span className="w-[84px] shrink-0 tracking-[-0.45px]">Transparency:</span><Slider pos="end" /><Spin v="100 %" /></div>
      </div>
    </div>
  );
}

function EdrawWindow() {
  return (
    <div className="absolute left-[21px] top-[42px] h-[690px] w-[1345px] overflow-hidden border-l border-t border-[#1f3d7a] bg-white tracking-[-0.15px]">
      <QuickAccess />
      <MenuTabs />
      <div className="ml-[2px] flex h-[102px] border-b border-l border-t border-[#d4d4d4] pt-[2px]">
        <FileGroup />
        <FontGroup />
        <BasicTools />
        <ArrangeGroup />
        <StylesGroup />
        <EditGroup />
      </div>
      <div className="flex">
        <Libraries />
        <DrawingArea />
        <FillPanel />
      </div>
    </div>
  );
}

/* ---------- Taskbar ---------- */

function Task({ children, bg = "", line = "bg-[#76b9ed]", w = "w-[40px]" }: { children: React.ReactNode; bg?: string; line?: string; w?: string }) {
  return (
    <div className="flex h-[40px] w-[49px] flex-col items-center">
      <div className={`flex h-[38px] ${w} items-center justify-center ${bg}`}>{children}</div>
      <div className={`h-[2px] ${w} ${line}`} />
    </div>
  );
}

function Taskbar() {
  return (
    <div className="absolute left-0 top-[728px] flex h-[40px] w-[1366px] bg-[linear-gradient(#262626_0_36px,#050b18_36px)]">
      <div className="flex h-[40px] w-[48px] items-center bg-[linear-gradient(90deg,#030304_22px,#0b0b0b_22px)] pl-[16px]">
        <Svg w={16} h={16}><path d="M0 2.500l7-1V7.500H0zM8 1.300L16 0v7.500H8zM0 8.500h7v6l-7-1zM8 8.500h8V16l-8-1.300z" fill="#fff" /></Svg>
        <span className="mt-[10px] ml-[7px] text-[12px] leading-[14px] text-[#2a2a2a]">Li</span>
      </div>
      <div className="flex h-[40px] w-[344px] items-center bg-[#333] pl-[9px]">
        <Svg w={22} h={22}><circle cx="11" cy="11" r="8.800" stroke="#fff" strokeWidth="2.800" /></Svg>
        <span className="ml-[9px] text-[14px] tracking-[0.060px] text-[#a0a0a0] whitespace-nowrap">I’m Cortana. Ask me anything.</span>
      </div>
      <div className="flex h-[40px] bg-[repeating-linear-gradient(90deg,transparent_0_8px,#2b2b2b_8px_9px),linear-gradient(90deg,#06202b,#141a1c_50px,#04160a_120px,#07211c_160px,#1b1d05_200px,#240a06_240px,#271b04_290px,#241d07_350px,#22170c_420px,#140b12_600px)] bg-[position:0_22px] bg-[size:100%_14px] bg-no-repeat">
        <div className="w-px" />
        <Task line="bg-[linear-gradient(90deg,#76b9ed_31px,#527fa6_31px)]"><Svg w={22} h={20}><path d="M0 1h8l1 2h12v15H0z" fill="#f3cf62" /><path d="M1 4h20v14H0z" fill="#fbe08a" /><path d="M4 10h14v9h-4v-4H8v4H4z" fill="#2fb0ea" /><path d="M5 10h12l-1 2H6z" fill="#8edcf8" /></Svg></Task>
        <Task line="bg-transparent"><Svg w={22} h={24}><path d="M0 6l21-2v19L0 21z" fill="#fff" /><path d="M6 6c0-6 8-7 9-1M9 5c1-5 6-5 7-1" stroke="#fff" strokeWidth="1.300" /><path d="M4 10h4.500v4H4zM9.500 9.500L15 9v5H9.500zM4 15h4.500v4L4 18.600zM9.500 15H15v4.700l-5.500-.5z" fill="#151515" /></Svg></Task>
        <Task line="bg-[linear-gradient(90deg,#76b9ed_31px,#527fa6_31px)]"><Svg w={24} h={24}><circle cx="12" cy="12.500" r="7.500" stroke="#4fc3f0" strokeWidth="4.500" /><path d="M7 13h14" stroke="#4fc3f0" strokeWidth="3.500" /><path d="M14 15.200h10v3H14z" fill="#1a1d1f" /><path d="M4 23C-2 22 5 9 15 3c5-3 8-2 7 2" stroke="#f8ca2a" strokeWidth="2" /></Svg></Task>
        <Task><Svg w={26} h={26}><circle cx="7.500" cy="7" r="6.500" fill="#fff" /><circle cx="15.500" cy="16" r="6.500" fill="#fff" /><circle cx="11.500" cy="11.500" r="9.500" fill="#fff" /><path d="M15.500 8.500C14 5.500 8 6 8 9c0 3.500 7.500 1.500 7.500 5s-6 4-8 .5" stroke="#14a7e0" strokeWidth="2.500" /><circle cx="20" cy="20" r="5.500" fill="#6bb700" stroke="#fff" /><path d="M17.500 20l2 2 3-3.500" stroke="#fff" strokeWidth="1.500" /></Svg></Task>
        <Task><div className="flex items-center"><div className="flex h-[22px] w-[13px] items-center justify-center bg-[#0a70c4] text-[12px] font-bold text-white [clip-path:polygon(0_10%,100%_0,100%_100%,0_90%)]">O</div><Svg w={9} h={12}><path d="M0 0h9v12H0z" fill="#fff" /><path d="M0 2l3.500 4L9 1.500M0 11.500h9" stroke="#0a70c4" /></Svg></div></Task>
        <Task><div className="flex items-center"><div className="flex h-[22px] w-[13px] items-center justify-center bg-[#1e7145] text-[11px] font-bold text-white [clip-path:polygon(0_10%,100%_0,100%_100%,0_90%)]">X</div><Svg w={9} h={16}><path d="M0 .5h8.500v15H0M0 3.500h7M0 6.500h7M0 9.500h7M0 12.500h7M4 2v12" stroke="#e8f0ea" /></Svg></div></Task>
        <Task bg="bg-[linear-gradient(90deg,#3f7238_18px,#3f3f3f_18px)]" line="bg-[#4fd83c]"><Svg w={22} h={22}><circle cx="11" cy="11" r="10.500" fill="#e94335" /><path d="M2 5.500L8 15l3 6.500A10.500 10.500 0 0 1 2 5.500z" fill="#34a853" /><path d="M12 6.500h8.500A10.500 10.500 0 0 1 11 21.500l5-8z" fill="#fbc116" /><circle cx="11" cy="11" r="5.200" fill="#fff" /><circle cx="11" cy="11" r="4.200" fill="#4285f4" /></Svg></Task>
        <Task w="w-[48px]" bg="bg-[#555]"><EdrawLogo s={22} /></Task>
        <Task><Svg w={24} h={22}><path d="M2 9C6 3 17 2 20 7c3 6-3 13-10 14-9 1-12-5-8-12z" fill="#d9e9f4" /><circle cx="5" cy="13" r="2" fill="#d83a2c" /><circle cx="8" cy="8" r="2" fill="#f0b820" /><circle cx="13" cy="7" r="2" fill="#45a83c" /><circle cx="9" cy="17" r="2.200" fill="#2a72c8" /><path d="M21 4l-7 17" stroke="#e08a34" strokeWidth="2.200" /><path d="M19 0l5 1-1 5-4-2z" fill="#b98a65" /></Svg></Task>
        <div className="w-[160px]" />
      </div>
      <div className="ml-auto flex h-[40px] items-center pr-[4px]">
        <Svg w={12} h={8}><path d="M.5 7L6 1.500 11.500 7" stroke="#fff" strokeWidth="1.300" /></Svg>
        <Svg w={17} h={12} c="ml-[10px]"><path d="M5 3.500h10v7H5z" stroke="#fff" /><path d="M7 5h6.500v4H7zM15.500 5H17v4h-1.500zM0 2h5v4H0z" fill="#fff" /><path d="M1.500 0v3M3.500 0v3M3 6v3.500h3" stroke="#fff" /></Svg>
        <Svg w={17} h={14} c="ml-[7px]"><path d="M5 1.500h11v8H4M10 10v3M6 13.500h8M.5.500h4v4h-4zM2.500 5v8.500" stroke="#fff" /></Svg>
        <Svg w={17} h={14} c="ml-[7px]"><path d="M.5 5h3l3-3.500v11L3.500 9h-3zM9 5c1 1.500 1 3 0 4.500" stroke="#fff" /><path d="M11 3c2 2.500 2 6 0 8.500" stroke="#ccc" /><path d="M13.500 1c3 4 3 8 0 12" stroke="#777" /></Svg>
        <Svg w={16} h={16} c="ml-[7px]"><path d="M0 0h16v13h-6l-2 3-2-3H0z" fill="#fff" /><path d="M3 3.500h10M3 6.500h10M3 9.500h6" stroke="#262626" /></Svg>
        <div className="ml-[7px] mr-[2px] w-[64px] pb-[3px] text-center text-[12px] leading-[17px] tracking-[-0.42px] whitespace-nowrap text-white">12:02 PM<br />7/20/2016</div>
        <div className="ml-[1px] h-[40px] w-px bg-[#6b6b6b]" />
      </div>
    </div>
  );
}

export default function App() {
  return (
    <div className="relative h-[768px] w-[1366px] overflow-hidden bg-white font-['Open_Sans','Noto_Sans',sans-serif]">
      <ExcelWindow />
      <EdrawWindow />
      <Taskbar />
    </div>
  );
}
